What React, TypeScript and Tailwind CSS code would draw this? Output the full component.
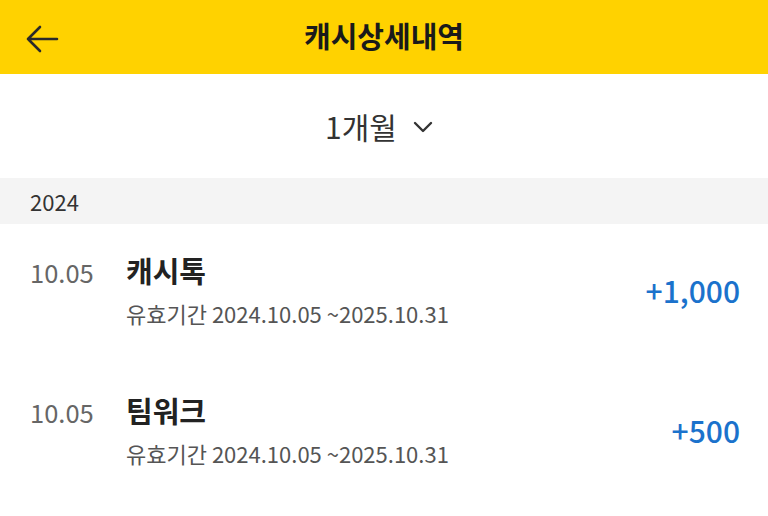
import React from "react";

const font = { fontFamily: '"Noto Sans CJK KR", "Noto Sans", sans-serif' };

function Row({ date, title, amount }: { date: string; title: string; amount: string }) {
  return (
    <div className="flex h-[140px] items-start pl-[30px] pr-[28px] pt-[26px]">
      <div className="w-[96px] pt-[5px] text-[25.5px] leading-[34px] text-[#666666]">{date}</div>
      <div className="flex flex-col">
        <div className="text-[29px] font-bold leading-[40px] text-[#222222]">{title}</div>
        <div className="mt-[8px] text-[22px] leading-[30px] text-[#555555]">유효기간 2024.10.05 ~2025.10.31</div>
      </div>
      <div className="ml-auto pt-[20px] text-[30px] font-medium leading-[40px] text-[#1b72cc]">{amount}</div>
    </div>
  );
}

export default function App() {
  return (
    <div className="h-[516px] w-[768px] overflow-hidden bg-white" style={font}>
      <header className="relative flex h-[74px] items-center justify-center bg-[#FFD200] pb-[4px]">
        <svg className="absolute left-[25px] top-[24px]" width="34" height="30" viewBox="0 0 34 30" fill="none">
          <path d="M32 15H3M15 3L3 15l12 12" stroke="#2a2a2a" strokeWidth="2.6" strokeLinecap="round" strokeLinejoin="round" />
        </svg>
        <h1 className="text-[29px] font-bold leading-none text-[#1a1a1a]">캐시상세내역</h1>
      </header>
      <div className="flex h-[104px] items-center justify-center gap-[16px] pr-[10px]">
        <span className="text-[30px] leading-none text-[#333333]">1개월</span>
        <svg width="20" height="12" viewBox="0 0 20 12" fill="none" className="mt-[2px]">
          <path d="M2 2l8 8 8-8" stroke="#333333" strokeWidth="2.4" strokeLinecap="round" strokeLinejoin="round" />
        </svg>
      </div>
      <div className="flex h-[46px] items-center bg-[#f4f4f4] px-[30px]">
        <span className="text-[22px] leading-none text-[#333333]">2024</span>
      </div>
      <Row date="10.05" title="캐시톡" amount="+1,000" />
      <Row date="10.05" title="팀워크" amount="+500" />
    </div>
  );
}
